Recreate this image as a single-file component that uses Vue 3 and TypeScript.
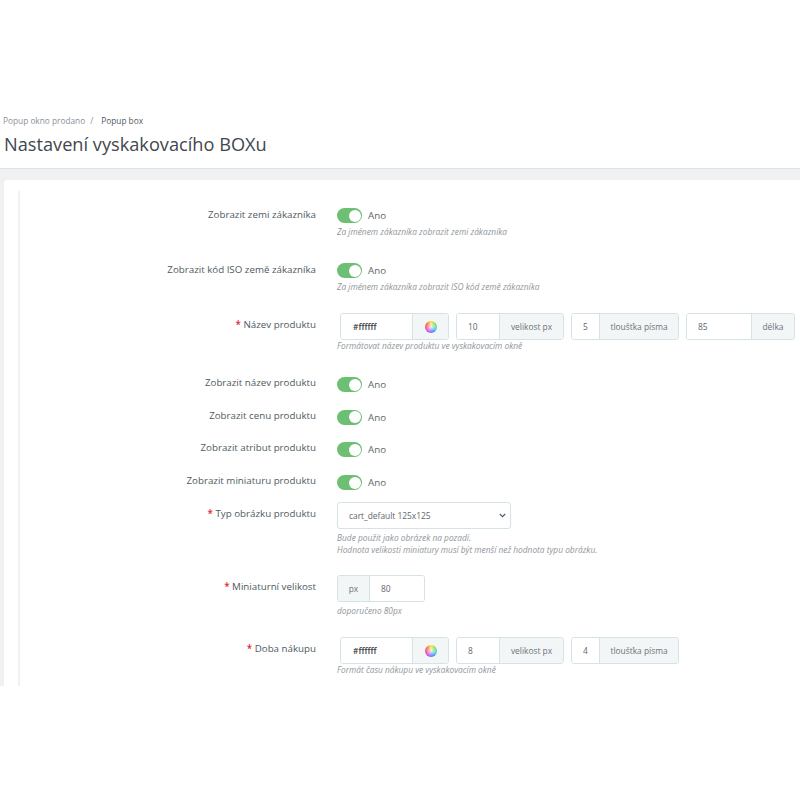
<script setup lang="ts">
interface Addon { value: string; label: string; inputWidth: number; addonWidth: number }
const nameAddons: Addon[] = [
  { value: '10', label: 'velikost px', inputWidth: 42, addonWidth: 64 },
  { value: '5', label: 'tloušťka písma', inputWidth: 27, addonWidth: 79 },
  { value: '85', label: 'délka', inputWidth: 64, addonWidth: 43 },
]
const timeAddons: Addon[] = [
  { value: '8', label: 'velikost px', inputWidth: 42, addonWidth: 64 },
  { value: '4', label: 'tloušťka písma', inputWidth: 27, addonWidth: 79 },
]
const switches = [
  'Zobrazit název produktu',
  'Zobrazit cenu produktu',
  'Zobrazit atribut produktu',
  'Zobrazit miniaturu produktu',
]
</script>

<template>
  <div class="page">
    <header class="head">
      <nav class="crumbs"><span>Popup okno prodano</span><i>/</i><b>Popup box</b></nav>
      <h1>Nastavení vyskakovacího BOXu</h1>
    </header>
    <main class="content">
      <section class="card">
        <div class="form">
          <div class="row r1">
            <label>Zobrazit zemi zákazníka</label>
            <div>
              <div class="toggle"><span class="sw"></span><span class="ano">Ano</span></div>
              <p class="help h-sw">Za jménem zákazníka zobrazit zemi zákazníka</p>
            </div>
          </div>
          <div class="row r2">
            <label>Zobrazit kód ISO země zákazníka</label>
            <div>
              <div class="toggle"><span class="sw"></span><span class="ano">Ano</span></div>
              <p class="help h-sw">Za jménem zákazníka zobrazit ISO kód země zákazníka</p>
            </div>
          </div>
          <div class="row r3">
            <label class="lb-in"><em>*</em> Název produktu</label>
            <div>
              <div class="groups">
                <div class="group color">
                  <span class="in hex">#ffffff</span>
                  <span class="add wheel-add"><span class="wheel"></span></span>
                </div>
                <div v-for="a in nameAddons" :key="a.label" class="group">
                  <span class="in" :style="{ width: a.inputWidth + 'px' }">{{ a.value }}</span>
                  <span class="add" :style="{ width: a.addonWidth + 'px' }">{{ a.label }}</span>
                </div>
              </div>
              <p class="help h-in">Formátovat název produktu ve vyskakovacím okně</p>
            </div>
          </div>
          <div v-for="s in switches" :key="s" class="row r4">
            <label class="lb-sw">{{ s }}</label>
            <div class="toggle"><span class="sw"></span><span class="ano">Ano</span></div>
          </div>
          <div class="row r5">
            <label class="lb-sel"><em>*</em> Typ obrázku produktu</label>
            <div>
              <div class="select">
                <span>cart_default 125x125</span>
                <svg width="7" height="5" viewBox="0 0 7 5"><path d="M.8 1l2.7 2.7L6.2 1" fill="none" stroke="#4b5a63" stroke-width="1.1"/></svg>
              </div>
              <p class="help h-sel">Bude použit jako obrázek na pozadí.<br>Hodnota velikosti miniatury musí být menší než hodnota typu obrázku.</p>
            </div>
          </div>
          <div class="row r6">
            <label class="lb-sel"><em>*</em> Miniaturní velikost</label>
            <div>
              <div class="group mini">
                <span class="add px">px</span>
                <span class="in val">80</span>
              </div>
              <p class="help h-mini">doporučeno 80px</p>
            </div>
          </div>
          <div class="row">
            <label class="lb-sel"><em>*</em> Doba nákupu</label>
            <div>
              <div class="groups">
                <div class="group color">
                  <span class="in hex">#ffffff</span>
                  <span class="add wheel-add"><span class="wheel"></span></span>
                </div>
                <div v-for="a in timeAddons" :key="a.label" class="group">
                  <span class="in" :style="{ width: a.inputWidth + 'px' }">{{ a.value }}</span>
                  <span class="add" :style="{ width: a.addonWidth + 'px' }">{{ a.label }}</span>
                </div>
              </div>
              <p class="help h-in">Formát času nákupu ve vyskakovacím okně</p>
            </div>
          </div>
        </div>
      </section>
    </main>
  </div>
</template>

<style>
html, body { margin: 0; background: #fff; }
</style>

<style scoped>
.page {
  width: 800px;
  height: 800px;
  overflow: hidden;
  background: #fff;
  font-family: "Open Sans", "Noto Sans", sans-serif;
  color: #4f5a61;
}
.head {
  box-sizing: border-box;
  height: 169px;
  padding: 113px 0 0 3px;
  border-bottom: 1px solid #dfe2e4;
}
.crumbs {
  display: flex;
  align-items: center;
  height: 14px;
  font-size: 8.3px;
  color: #8a9197;
}
.crumbs i { margin: 0 8px 0 5px; color: #7d9b6f; font-style: normal; }
.crumbs b { font-weight: 500; color: #4f5a61; }
h1 {
  margin: 4px 0 0 1px;
  font-size: 18.2px;
  line-height: 26px;
  font-weight: 400;
  color: #41474e;
}
.content {
  box-sizing: border-box;
  height: 517px;
  overflow: hidden;
  padding: 11px 0 0 4px;
  background: #eff1f2;
}
.card {
  box-sizing: border-box;
  height: 506px;
  padding: 11px 0 0 14px;
  background: #fff;
  border-radius: 4px 0 0 0;
}
.form {
  box-sizing: border-box;
  height: 495px;
  padding-top: 17px;
  border-left: 2px solid #eff1f2;
}
.row {
  display: grid;
  grid-template-columns: 296px 1fr;
  column-gap: 21px;
  width: 780px;
}
.r1 { height: 55px; }
.r2 { height: 50px; }
.r3 { height: 64px; }
.r4 { height: 32.7px; }
.r4:nth-child(7) { height: 28px; }
.r5 { height: 73px; }
.r6 { height: 62px; }
label {
  display: block;
  font-size: 9.75px;
  line-height: 14px;
  text-align: right;
}
.lb-sw { margin-top: -1px; }
.lb-in { padding-top: 5px; }
.lb-sel { padding-top: 4px; }
em { font-style: normal; color: #e0272f; font-weight: 600; }
.toggle {
  display: flex;
  align-items: center;
  height: 15px;
  font-size: 9.75px;
  color: #5d666c;
}
.ano { line-height: 17px; }
.sw {
  position: relative;
  box-sizing: border-box;
  width: 25px;
  height: 15px;
  margin-right: 6px;
  border-radius: 8px;
  background: #6cbf73;
}
.sw::after {
  content: "";
  position: absolute;
  top: 1.5px;
  right: 1.5px;
  width: 12px;
  height: 12px;
  border-radius: 50%;
  background: #fff;
}
.help {
  margin: 0;
  font-size: 8.35px;
  line-height: 12px;
  font-style: italic;
  color: #8f969b;
}
.h-sw { margin-top: 3px; }
.h-in { margin-top: 0; }
.h-sel { margin-top: 3px; }
.h-mini { margin-top: 3px; }
.groups {
  display: flex;
  gap: 7px;
  margin-left: 3px;
}
.row:last-child .groups { margin-top: -1px; }
.group {
  display: flex;
  box-sizing: border-box;
  height: 27px;
  border: 1px solid #d5e2e6;
  border-radius: 3px;
  overflow: hidden;
  font-size: 8.4px;
  line-height: 25px;
}
.in {
  box-sizing: border-box;
  display: block;
  padding-left: 11px;
  color: #5d666c;
  background: #fff;
}
.hex {
  width: 71px;
  padding-left: 12px;
  font-weight: 600;
  color: #363a41;
}
.add {
  box-sizing: border-box;
  display: block;
  text-align: center;
  color: #6c7479;
  background: #f3f6f7;
  border-left: 1px solid #d5e2e6;
}
.wheel-add {
  display: flex;
  align-items: center;
  justify-content: center;
  width: 36px;
}
.wheel {
  width: 12px;
  height: 12px;
  border-radius: 50%;
  background:
    radial-gradient(circle, rgba(255, 255, 255, 0.85) 0, rgba(255, 255, 255, 0) 70%),
    conic-gradient(#ffdf3a, #7be04e, #3fd8d0, #4a7bf0, #b84ef0, #f0479a, #f5653a, #ffdf3a);
}
.select {
  display: flex;
  align-items: center;
  justify-content: space-between;
  box-sizing: border-box;
  width: 174px;
  height: 27px;
  margin-top: -1px;
  padding: 0 4px 0 11px;
  border: 1px solid #d5e2e6;
  border-radius: 3px;
  font-size: 8.4px;
  color: #5d666c;
}
.mini { width: 88px; margin-top: -1px; }
.px {
  width: 32px;
  border-left: 0;
  border-right: 1px solid #d5e2e6;
}
.val { flex: 1; }
</style>
